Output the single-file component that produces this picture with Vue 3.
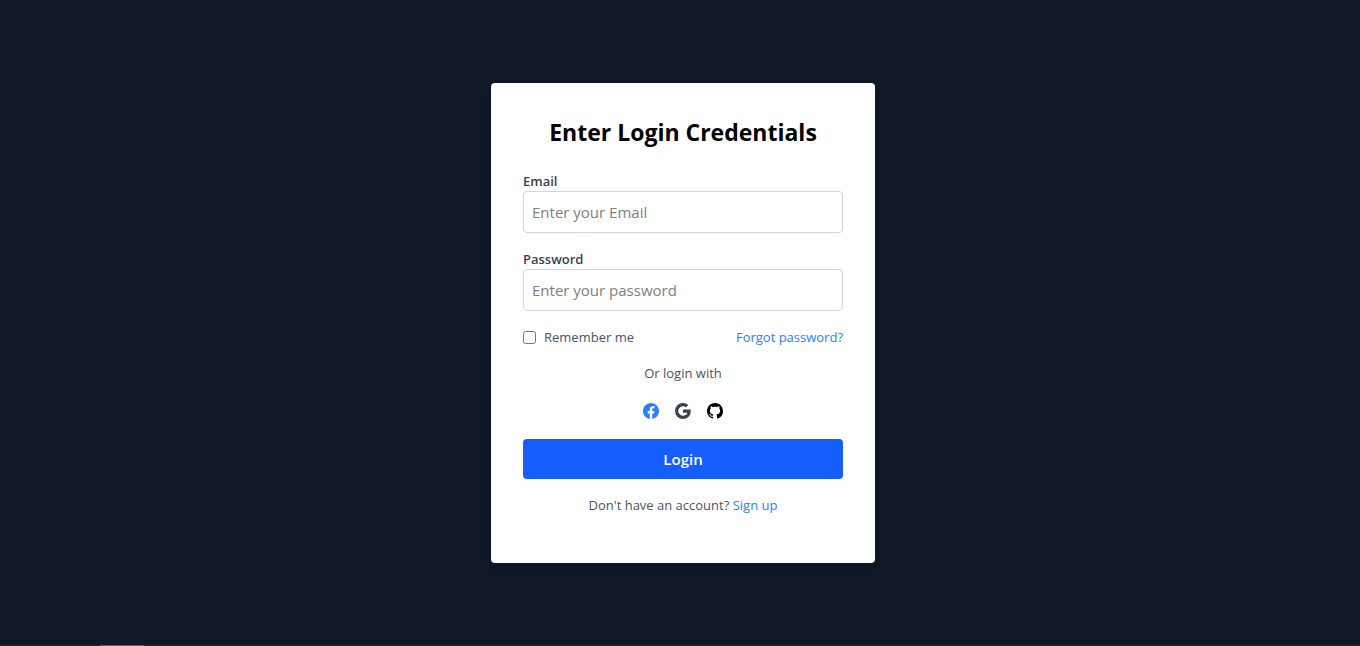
<script setup>
import { ref } from 'vue'

const email = ref('')
const password = ref('')
const remember = ref(false)
</script>

<template>
  <div class="page">
    <main class="stage">
      <form class="card" @submit.prevent>
        <h1 class="title">Enter Login Credentials</h1>

        <div class="field">
          <label for="email">Email</label>
          <input id="email" v-model="email" type="email" placeholder="Enter your Email" />
        </div>

        <div class="field">
          <label for="password">Password</label>
          <input id="password" v-model="password" type="password" placeholder="Enter your password" />
        </div>

        <div class="options">
          <label class="remember" for="remember">
            <input id="remember" v-model="remember" type="checkbox" />
            <span>Remember me</span>
          </label>
          <a href="#">Forgot password?</a>
        </div>

        <p class="note">Or login with</p>

        <div class="social">
          <a class="facebook" href="#" aria-label="Facebook">
            <svg viewBox="0 0 16 16" fill="currentColor"><path d="M16 8.049c0-4.446-3.582-8.05-8-8.05C3.58 0-.002 3.603-.002 8.05c0 4.017 2.926 7.347 6.75 7.951v-5.625h-2.03V8.05H6.75V6.275c0-2.017 1.195-3.131 3.022-3.131.876 0 1.791.157 1.791.157v1.98h-1.009c-.993 0-1.303.621-1.303 1.258v1.51h2.218l-.354 2.326H9.25V16c3.824-.604 6.75-3.934 6.75-7.951z" /></svg>
          </a>
          <a class="google" href="#" aria-label="Google">
            <svg viewBox="0 0 16 16" fill="currentColor"><path d="M15.545 6.558a9.4 9.4 0 0 1 .139 1.626c0 2.434-.87 4.492-2.384 5.885h.002C11.978 15.292 10.158 16 8 16A8 8 0 1 1 8 0a7.7 7.7 0 0 1 5.352 2.082l-2.284 2.284A4.35 4.35 0 0 0 8 3.166c-2.087 0-3.86 1.408-4.492 3.304a4.8 4.8 0 0 0 0 3.063h.003c.635 1.893 2.405 3.301 4.492 3.301 1.078 0 2.004-.276 2.722-.764h-.003a3.7 3.7 0 0 0 1.599-2.431H8v-3.08z" /></svg>
          </a>
          <a class="github" href="#" aria-label="GitHub">
            <svg viewBox="0 0 16 16" fill="currentColor"><path d="M8 0C3.58 0 0 3.58 0 8c0 3.54 2.29 6.53 5.47 7.59.4.07.55-.17.55-.38 0-.19-.01-.82-.01-1.49-2.01.37-2.53-.49-2.69-.94-.09-.23-.48-.94-.82-1.13-.28-.15-.68-.52-.01-.53.63-.01 1.08.58 1.23.82.72 1.21 1.87.87 2.33.66.07-.52.28-.87.51-1.07-1.78-.2-3.64-.89-3.64-3.95 0-.87.31-1.59.82-2.15-.08-.2-.36-1.02.08-2.12 0 0 .67-.21 2.2.82.64-.18 1.32-.27 2-.27s1.36.09 2 .27c1.53-1.04 2.2-.82 2.2-.82.44 1.1.16 1.92.08 2.12.51.56.82 1.27.82 2.15 0 3.07-1.87 3.75-3.65 3.95.29.25.54.73.54 1.48 0 1.07-.01 1.93-.01 2.2 0 .21.15.46.55.38A8.01 8.01 0 0 0 16 8c0-4.42-3.58-8-8-8" /></svg>
          </a>
        </div>

        <button class="submit" type="submit">Login</button>

        <p class="note">Don't have an account? <a href="#">Sign up</a></p>
      </form>
    </main>
    <div class="edge"><span></span></div>
  </div>
</template>

<style>
body {
  margin: 0;
  background: #101828;
}
</style>

<style scoped>
.page {
  box-sizing: border-box;
  min-height: 100vh;
  display: flex;
  flex-direction: column;
  background: #101726;
  color: #4a5565;
  font-family: "Open Sans", "Noto Sans", sans-serif;
  font-size: 13px;
  line-height: 20px;
}

.stage {
  flex: 1;
  display: flex;
  align-items: center;
  justify-content: center;
  padding-left: 6px;
}

.card {
  box-sizing: border-box;
  width: 100%;
  max-width: 384px;
  display: flex;
  flex-direction: column;
  gap: 16px;
  padding: 32px 32px 48px;
  background: #fff;
  border-radius: 4px;
  box-shadow: 0 4px 6px rgba(0, 0, 0, 0.1);
}

.title {
  margin: 0 0 8px;
  color: #000;
  font-size: 23px;
  font-weight: 700;
  line-height: 34px;
  text-align: center;
  height: 32px;
}

.field {
  display: flex;
  flex-direction: column;
}

.field label {
  color: #364153;
  font-weight: 600;
}

.field input {
  box-sizing: border-box;
  width: 100%;
  height: 42px;
  padding: 8px;
  border: 1px solid #d1d5dc;
  border-radius: 4px;
  background: #fff;
  color: #000;
  font: inherit;
  font-size: 15px;
  line-height: 24px;
}

.field input::placeholder {
  color: #808080;
  opacity: 1;
}

.options {
  display: flex;
  align-items: center;
  justify-content: space-between;
}

.remember {
  display: flex;
  align-items: center;
  gap: 8px;
}

.remember input {
  width: 13px;
  height: 13px;
  margin: 0;
}

a {
  color: #2b7fff;
  text-decoration: none;
}

.note {
  margin: 0;
  text-align: center;
}

.social {
  display: flex;
  align-items: center;
  justify-content: center;
  gap: 16px;
  height: 24px;
}

.social svg {
  display: block;
  width: 16px;
  height: 16px;
}

.social .google {
  color: #364153;
}

.social .github {
  color: #000;
}

.submit {
  height: 40px;
  padding: 8px;
  border: 0;
  border-radius: 4px;
  background: #155dfc;
  color: #fff;
  font: inherit;
  font-size: 15px;
  font-weight: 600;
  line-height: 24px;
}

.edge {
  height: 1px;
  margin-top: -1px;
  padding-left: 100px;
  background: #2b2930;
}

.edge span {
  display: block;
  width: 44px;
  height: 1px;
  background: #5c5d66;
}
</style>
